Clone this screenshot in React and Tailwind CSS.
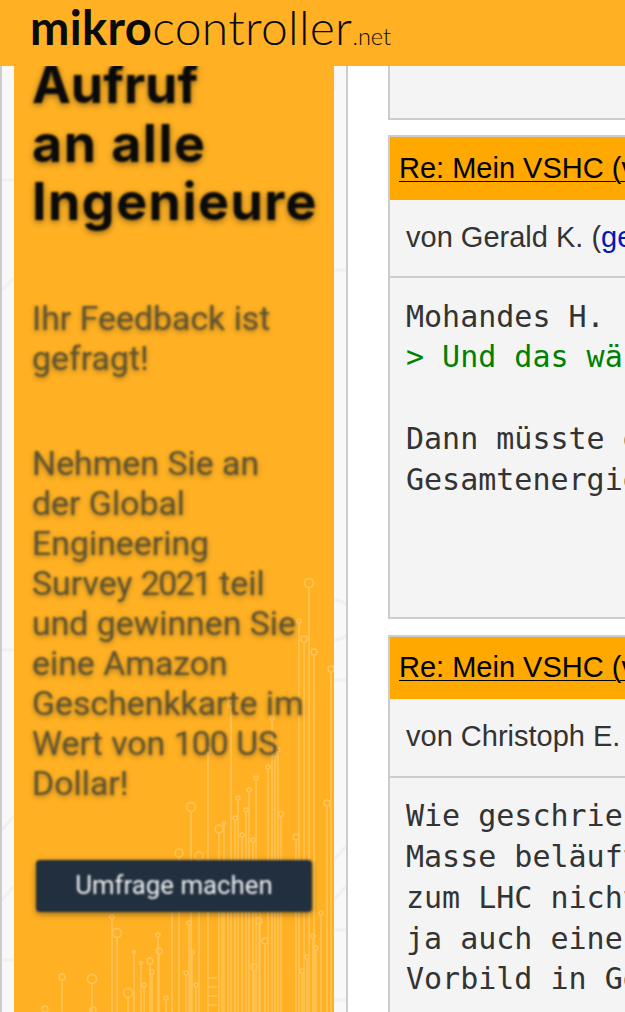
import React from 'react';

const mono = "font-['DejaVu_Sans_Mono','Liberation_Mono',monospace]";

// circuit traces behind the banner: [x, topY, r]
const traces = [
  [309, 583, 4.5], [299, 621, 2], [304, 639, 3], [314, 652, 3], [331, 669, 3], [231, 704, 3], [208, 750, 3],
  [191, 807, 4.5], [219, 829, 4], [224, 823, 1.5], [235, 818, 2], [238, 798, 2], [242, 835, 2], [246, 810, 2],
  [249, 790, 2], [253, 840, 2], [256, 778, 2], [268, 767, 2], [272, 718, 2], [275, 755, 2], [278, 750, 2],
  [281, 814, 2.5], [296, 837, 3], [327, 803, 3], [179, 853, 4], [199, 856, 4],
  [117, 933, 4.5], [112, 917, 2], [158, 935, 2], [159, 951, 3], [134, 952, 1.5], [141, 963, 1.5], [150, 961, 3],
  [152, 972, 2], [144, 985, 2], [128, 993, 4.5], [62, 977, 3], [92, 979, 4.5], [166, 998, 2], [93, 1010, 3],
  [45, 1009, 3], [172, 912, 0], [192, 952, 2], [186, 973, 2], [196, 985, 2], [189, 923, 2], [222, 912, 0],
  [228, 912, 0], [265, 941, 3], [259, 921, 3], [254, 967, 3], [260, 912, 0], [307, 957, 2], [313, 936, 2],
  [316, 948, 2], [302, 971, 2], [321, 913, 2],
];

function Traces() {
  return (
    <svg className="absolute inset-0 blur-[0.4px]" width="320" height="946" viewBox="14 66 320 946" fill="none" stroke="#ffd98f" strokeWidth="1.5" opacity="0.5">
      {traces.map(([x, top, r], i) => (
        <g key={i}>
          <line x1={x} y1={top + r} x2={x} y2={1012} />
          {r > 0 && <circle cx={x} cy={top} r={r} />}
        </g>
      ))}
      {[978, 987, 996, 1005].map((y) => <line key={y} x1="208" y1={y} x2="217" y2={y} />)}
    </svg>
  );
}

// faint board pattern on the strip around the banner
function SidebarPattern() {
  return (
    <svg className="absolute inset-0" width="344" height="946" viewBox="2 66 344 946" fill="none" stroke="#f0f0f0" strokeWidth="3">
      <path d="M2 180h12M2 290l12-12M2 650h12M334 600a14 14 0 1 1 0 40M334 680h12M334 860l12-14M334 900l12-14M334 930h12M334 1000h12M2 830l12-14M2 900l12-14M2 960h12" />
      <path d="M334 70v20M334 270l12 0" />
    </svg>
  );
}

function Post({ author, link, headClass, rowClass, preClass, children, height }) {
  return (
    <div className="border-2 border-[#ccc] bg-[#f4f4f4] w-[400px] shrink-0">
      <div className={`bg-[#ffa800] pl-[8px] text-[29px] leading-[34px] text-black whitespace-nowrap ${headClass}`}>
        <span className="pl-[1px] underline underline-offset-[3px] decoration-[1px]">Re: Mein VSHC (verfasst</span>
      </div>
      <div className={`border-b-2 border-[#ccc] pl-[16px] text-[#333] text-[29px] leading-[36px] whitespace-nowrap ${rowClass}`}>
        von {author}{link && <> (<span className="text-[#0019b4]">{link}</span>)</>}
      </div>
      <pre className={`${mono} px-[16px] text-[30px] leading-[40.8px] text-[#333] overflow-hidden ${preClass}`} style={{ height }}>
        {children}
      </pre>
    </div>
  );
}

export default function App() {
  return (
    <div className="h-[1012px] w-[625px] overflow-hidden bg-white font-['Liberation_Sans',Arial,sans-serif]">
      <header className="relative z-10 h-[66px] bg-[#ffb123] pl-[30px] flex items-baseline pt-[3px] text-[#0b0b0b] whitespace-nowrap font-['Lato',sans-serif]">
        <span className="font-bold text-[47px] leading-[48px] tracking-[0.4px]">mikro</span>
        <span className="font-light text-[48px] leading-[48px] tracking-[0.3px]">controller</span>
        <span className="font-light text-[23.5px] leading-[48px]">.net</span>
      </header>
      <div className="flex h-[946px]">
        <aside className="relative w-[348px] shrink-0 border-x-2 border-[#ccc] bg-[#f8f8f8]">
          <SidebarPattern />
          <div className="relative ml-[12px] w-[320px] h-full bg-[#ffb123] overflow-hidden font-['Roboto',sans-serif]">
            <Traces />
            <div className="relative pl-[18px] blur-[0.8px]">
              <h2 className="text-[#0a0a0a] font-['Inter',sans-serif] font-bold text-[52px] leading-[58.5px] tracking-[1.45px] [text-shadow:0_2px_6px_rgba(0,0,0,0.45)] -mt-[10px]">
                <span className="tracking-normal">Aufruf</span><br />an alle<br />Ingenieure
              </h2>
              <p className="mt-[67px] text-[#5d5232] text-[33.85px] leading-[40px] [text-shadow:0_2px_5px_rgba(0,0,0,0.35)]">
                Ihr Feedback ist<br />gefragt!
              </p>
              <p className="mt-[65px] text-[#5d5232] text-[33.85px] leading-[40px] whitespace-nowrap [text-shadow:0_2px_5px_rgba(0,0,0,0.35)]">
                Nehmen Sie an<br />der Global<br />Engineering<br />Survey <span className="tracking-[-1.5px]">2021</span> teil<br />und gewinnen Sie<br />eine Amazon<br />Geschenkkarte im<br />Wert von <span className="tracking-[-1px]">100</span> US<br />Dollar!
              </p>
              <div className="mt-[56px] ml-[4px] w-[276px] h-[52px] rounded-[4px] bg-[#212f3f] flex items-center justify-center text-[#f0f0f0] text-[25.8px] shadow-[0_2px_6px_rgba(0,0,0,0.4)]">
                Umfrage machen
              </div>
            </div>
          </div>
        </aside>
        <main className="pl-[40px] flex flex-col gap-[16px]">
          <div className="-mt-[38px] -mb-[1px] h-[92px] border-2 border-[#ccc] bg-[#f4f4f4] w-[400px] shrink-0" />
          <Post author="Gerald K." link="gerald" headClass="h-[63px] pt-[14px]" rowClass="h-[78px] pt-[19px]" preClass="pt-[18.6px]" height="339px">
            <span>Mohandes H. schrieb:</span>{'\n'}
            <span className="text-[#008000]">{'> Und das wäre'}</span>{'\n\n'}
            <span>Dann müsste die</span>{'\n'}
            <span>Gesamtenergie</span>
          </Post>
          <Post author="Christoph E." headClass="h-[62px] pt-[13px]" rowClass="h-[79px] pt-[19px]" preClass="pt-[18.2px]" height="300px">
            {'Wie geschrieben\nMasse beläuft\nzum LHC nicht\nja auch eine\nVorbild in Genf'}
          </Post>
        </main>
      </div>
    </div>
  );
}
